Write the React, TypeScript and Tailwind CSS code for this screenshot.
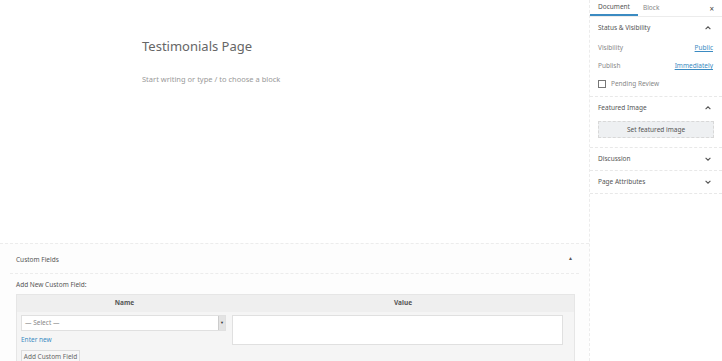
import React from 'react'

const ChevronUp = () => (
    <svg width="8" height="8" viewBox="0 0 10 10" className="text-[#555]">
        <path d="M2 6.5 L5 3.5 L8 6.5" fill="none" stroke="currentColor" strokeWidth="1.4" />
    </svg>
)

const ChevronDown = () => (
    <svg width="8" height="8" viewBox="0 0 10 10" className="text-[#555]">
        <path d="M2 3.5 L5 6.5 L8 3.5" fill="none" stroke="currentColor" strokeWidth="1.4" />
    </svg>
)

const Panel = ({ title, open, children }: { title: string; open?: boolean; children?: React.ReactNode }) => (
    <div className="border-b border-dashed border-[#e8e8e8] px-[8px]">
        <div className="flex items-center justify-between h-[22px] pr-[2px]">
            <span className="text-[#555]">{title}</span>
            {open ? <ChevronUp /> : <ChevronDown />}
        </div>
        {children}
    </div>
)

const App = () => {
    return (
        <div className="w-[722px] h-[361px] flex bg-white overflow-hidden text-[6.5px] text-[#555]" style={{ fontFamily: '"Noto Sans", "Open Sans", sans-serif' }}>
            <div className="w-[589px] flex flex-col">
                <div className="h-[243px] shrink-0 pl-[142px] pt-[37px]">
                    <h1 className="text-[13px] text-[#666] leading-[18px]">Testimonials Page</h1>
                    <p className="mt-[19px] text-[7.5px] text-[#999]">Start writing or type / to choose a block</p>
                </div>
                <div className="flex-1 min-h-0 overflow-hidden bg-[#fdfdfd] border-t border-dashed border-[#ececec] px-[10px]">
                    <div className="flex items-center justify-between h-[30px] border-b border-dashed border-[#ececec] pl-[6px] pr-[6px]">
                        <span className="text-[#555] pt-[3px]">Custom Fields</span>
                        <span className="text-[5px] text-[#555]">▲</span>
                    </div>
                    <div className="pl-[6px] pr-[4px]">
                        <p className="mt-[6px] text-[#555]">Add New Custom Field:</p>
                        <div className="mt-[4px] border border-[#e6e6e6] bg-[#f5f5f5]">
                            <div className="flex h-[17px] items-center bg-[#efefef] font-bold text-[#555]">
                                <div className="w-[215px] text-center">Name</div>
                                <div className="flex-1 text-center">Value</div>
                            </div>
                            <div className="flex gap-[6px] px-[4px] pt-[3px] pb-[8px]">
                                <div className="w-[205px] flex flex-col">
                                    <div className="h-[16px] flex items-center justify-between border border-[#e0e0e0] bg-white pl-[3px]">
                                        <span className="text-[#888]">— Select —</span>
                                        <span className="h-[14px] w-[7px] bg-[#e3e3e3] border-l border-[#ccc] flex items-center justify-center text-[4px] text-[#333]">▼</span>
                                    </div>
                                    <span className="mt-[4px] text-[#3b8bc2]">Enter new</span>
                                    <span className="mt-[5px] w-[59px] h-[14px] border border-[#ddd] bg-[#f7f7f7] flex items-center justify-center text-[#666]">Add Custom Field</span>
                                </div>
                                <div className="w-[331px] h-[30px] border border-[#e0e0e0] bg-white" />
                            </div>
                        </div>
                    </div>
                </div>
            </div>
            <div className="w-[133px] border-l border-dashed border-[#ececec] flex flex-col">
                <div className="flex items-center h-[17px] border-b border-[#ececec] relative">
                    <div className="h-full px-[8px] flex items-center border-b-2 border-[#3b8bc2] text-[#555]">Document</div>
                    <div className="px-[5px] text-[#888]">Block</div>
                    <span className="absolute right-[8px] top-[3px] text-[8px] text-[#444]">×</span>
                </div>
                <Panel title="Status & Visibility" open>
                    <div className="flex justify-between h-[18px] items-center pr-[1px]">
                        <span className="text-[#888]">Visibility</span>
                        <span className="text-[#3b8bc2] underline">Public</span>
                    </div>
                    <div className="flex justify-between h-[18px] items-center pr-[1px]">
                        <span className="text-[#888]">Publish</span>
                        <span className="text-[#3b8bc2] underline">Immediately</span>
                    </div>
                    <div className="flex items-center gap-[5px] h-[18px] mb-[3px]">
                        <span className="w-[8px] h-[8px] border border-[#777] bg-white" />
                        <span className="text-[#888]">Pending Review</span>
                    </div>
                </Panel>
                <Panel title="Featured Image" open>
                    <div className="h-[17px] mt-[2px] mb-[9px] border border-dashed border-[#d8d8d8] bg-[#eef0f2] flex items-center justify-center text-[#555]">
                        Set featured image
                    </div>
                </Panel>
                <Panel title="Discussion" />
                <Panel title="Page Attributes" />
            </div>
        </div>
    )
}

export default App
